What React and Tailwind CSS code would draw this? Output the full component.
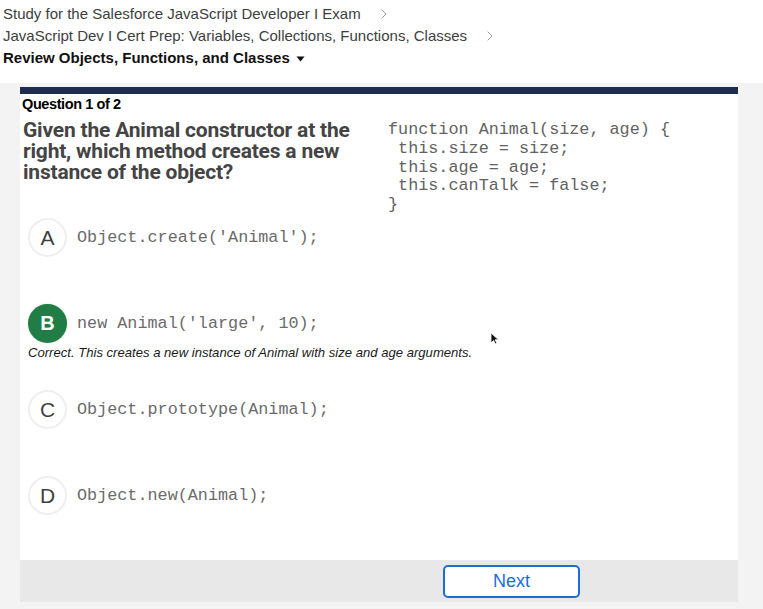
import React from 'react';
import { ChevronRight } from 'lucide-react';

const sans = { fontFamily: '"Liberation Sans", Arial, sans-serif' };

const Option = ({ letter, code, correct }) => (
  <div className="flex items-center">
    <div
      className={
        correct
          ? 'w-[39px] h-[39px] rounded-full bg-[#1f7d45] text-white font-bold flex items-center justify-center text-[20px] shadow-[0_0_2px_rgba(0,0,0,0.15)]'
          : 'w-[39px] h-[39px] rounded-full bg-white border-2 border-[#efefef] text-[#3f3f3f] flex items-center justify-center text-[21px]'
      }
    >
      {letter}
    </div>
    <span className="ml-[10px] font-['Liberation_Mono',monospace] text-[16.8px] text-[#6b6b6b]">{code}</span>
  </div>
);

const App = () => {
  return (
    <div className="min-h-screen bg-[#f3f3f3] font-['Liberation_Sans',Arial,sans-serif]">
      <div className="bg-white px-[3px] pt-[3px] pb-[14px] text-[15px] leading-[22px]">
        <div className="flex items-center text-[#3e3e3e]">
          <span>Study for the Salesforce JavaScript Developer I Exam</span>
          <ChevronRight size={16} strokeWidth={1.4} className="ml-[15px] text-[#9a9a9a]" />
        </div>
        <div className="flex items-center text-[#3e3e3e]">
          <span>JavaScript Dev I Cert Prep: Variables, Collections, Functions, Classes</span>
          <ChevronRight size={16} strokeWidth={1.4} className="ml-[15px] text-[#9a9a9a]" />
        </div>
        <div className="flex items-center font-bold text-[#111]">
          <span>Review Objects, Functions, and Classes</span>
          <svg width="9" height="6" viewBox="0 0 9 6" className="ml-[6px] mt-[2px]">
            <path d="M0.5 0.5h8L4.5 5.5z" fill="#111" />
          </svg>
        </div>
      </div>

      <div className="px-[20px] pt-[4px] pr-[25px]">
        <div className="relative bg-white border-t-[7px] border-[#1c2d50]">
          <div className="px-[2px] pt-[1px] text-[14.5px] leading-[18px] font-bold text-black tracking-[-0.4px]">
            Question 1 of 2
          </div>

          <div className="flex mt-[7px]">
            <div className="w-[368px] pl-[3px] pr-[14px] font-['Roboto',sans-serif] font-bold text-[21px] leading-[21px] text-[#444] tracking-[-0.2px]">
              Given the Animal constructor at the right, which method creates a new instance of the object?
            </div>
            <pre className="font-['Liberation_Mono',monospace] text-[16.8px] leading-[18.75px] text-[#626262] mt-[1px]">
{`function Animal(size, age) {
 this.size = size;
 this.age = age;
 this.canTalk = false;
}`}
            </pre>
          </div>

          <div className="pl-[8px] mt-[3px] pb-[45px]">
            <Option letter="A" code="Object.create('Animal');" />
            <div className="mt-[47px]">
              <Option letter="B" code="new Animal('large', 10);" correct />
            </div>
            <div className="mt-[2px] text-[13.1px] leading-[16px] italic text-[#1a1a1a]">
              Correct. This creates a new instance of Animal with size and age arguments.
            </div>
            <div className="mt-[29px]">
              <Option letter="C" code="Object.prototype(Animal);" />
            </div>
            <div className="mt-[47px]">
              <Option letter="D" code="Object.new(Animal);" />
            </div>
          </div>

          <div className="bg-[#e8e8e8] h-[42px] flex items-center pl-[423px] pt-[1px]">
            <button className="w-[137px] h-[33px] rounded-[5px] border-2 border-[#1b6fd0] bg-white text-[#1b6fd0] text-[18px]" style={sans}>
              Next
            </button>
          </div>

          <svg width="9" height="13" viewBox="0 0 9 13" className="absolute left-[470px] top-[238px]">
            <path d="M1 1v10l2.5-2.5 2 3.5 1.5-.8-2-3.4h3.5z" fill="#111" stroke="#fff" strokeWidth="0.8" />
          </svg>
        </div>
      </div>
    </div>
  );
};

export default App;
